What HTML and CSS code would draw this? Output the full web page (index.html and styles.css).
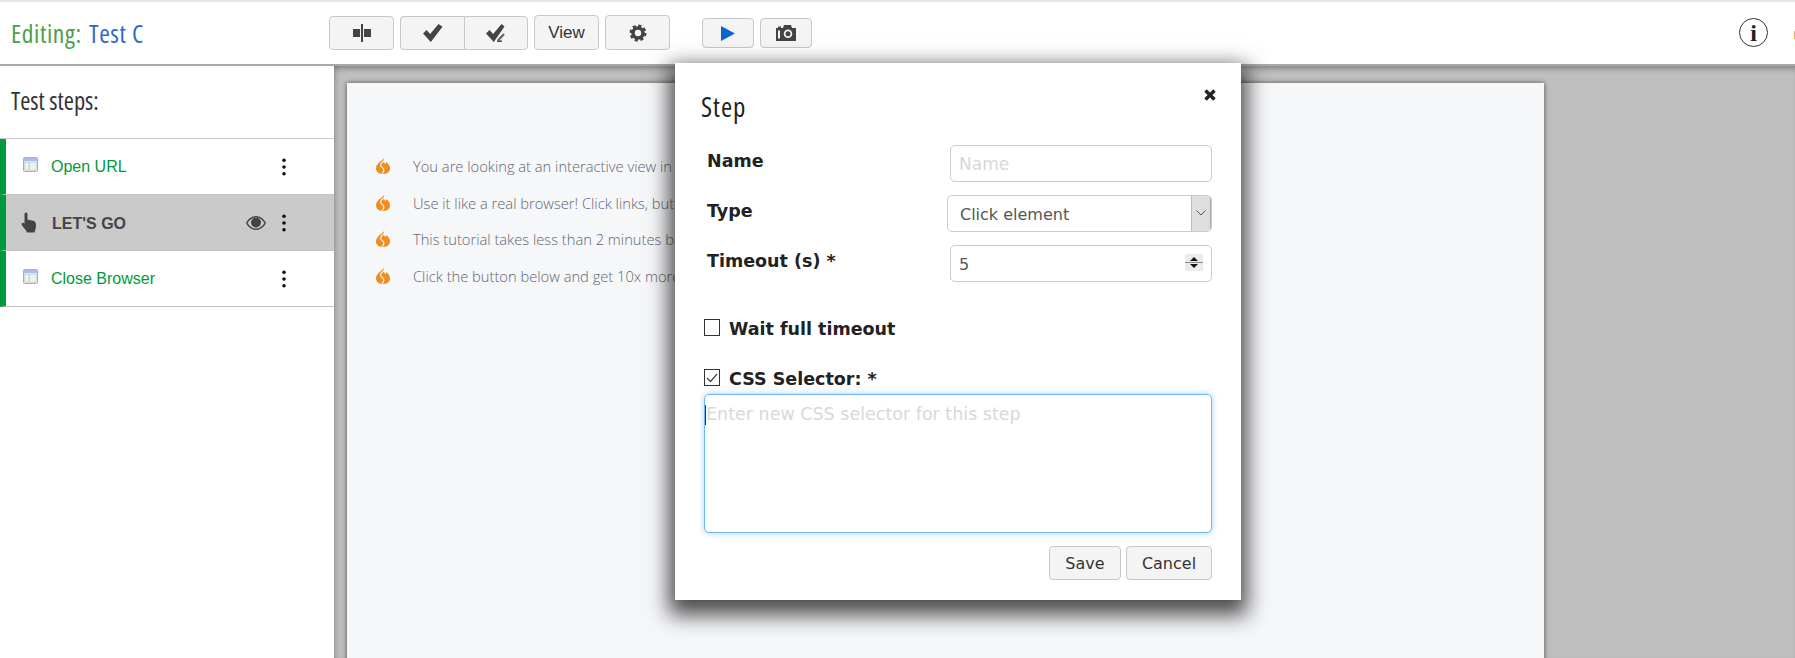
FILE: index.html
```html
<!DOCTYPE html>
<html lang="en">
<head>
<meta charset="utf-8">
<title>Editing: Test C</title>
<link rel="stylesheet" href="styles.css">
</head>
<body>
<svg class="defs" width="0" height="0" aria-hidden="true">
  <defs>
    <symbol id="i-window" viewBox="0 0 15 15">
      <rect x="0.5" y="0.5" width="14" height="14" rx="1" fill="#dfe6e4" stroke="#a3aebb"/>
      <rect x="1" y="1" width="13" height="3" fill="#a9bfe4"/>
      <rect x="2" y="5.500" width="3.500" height="7.500" fill="#f4f6f4" stroke="#c3cbc9" stroke-width=".6"/>
      <rect x="6.500" y="5.500" width="6.500" height="7.500" fill="#eef1ee" stroke="#cfd5d3" stroke-width=".6"/>
    </symbol>
    <symbol id="i-kebab" viewBox="0 0 6 18">
      <circle cx="3" cy="2.300" r="1.800" fill="#111"/>
      <circle cx="3" cy="9" r="1.800" fill="#111"/>
      <circle cx="3" cy="15.700" r="1.800" fill="#111"/>
    </symbol>
    <symbol id="i-fire" viewBox="0 0 15 16">
      <path fill="#ee8d22" d="M8.500 0c.6 1.700 0 2.700-.8 3.700 1.800.4 2.400 1.400 2.700 2.500.6-.5.8-1.200.7-2.200 2.300 1.600 3.900 3.900 3.900 6.500 0 3.400-3 5.500-7 5.500s-7-2.100-7-5.500c0-2.800 1.700-4.500 3-6C5.700 3.200 7.800 2.200 8.500 0z"/>
      <path fill="none" stroke="#f6f7f9" stroke-width="1.200" d="M8 3.500C4.800 6 5 8.200 7.500 9.700 9.600 11 9.200 13.500 7 15.500"/>
    </symbol>
  </defs>
</svg>
<div class="app">
  <header class="topbar">
    <h1 class="page-title"><span class="title-label">Editing:</span> <span class="title-name">Test C</span></h1>
    <div class="toolbar">
      <button class="btn btn-wide" type="button" aria-label="Split">
        <svg width="18" height="18" viewBox="0 0 18 18"><path fill="#444" d="M0 5h7v8H0zM11 5h7v8h-7zM8 0h2v18H8z"/></svg>
      </button>
      <div class="btn-group">
        <button class="btn btn-seg" type="button" aria-label="Check">
          <svg width="20" height="18" viewBox="0 0 20 18"><path fill="#444" d="M0 9.500 3.500 6l3.700 4L15.500 0 19.500 2.800 7.800 18z"/></svg>
        </button>
        <button class="btn btn-seg" type="button" aria-label="Check all">
          <svg width="20" height="18" viewBox="0 0 20 18"><path fill="#444" d="M0 9.500 3.500 6l3.700 4L15.500 0 18.500 2.500 7.800 18z"/><path fill="none" stroke="#666" stroke-width="2.200" d="M12 16.500l6-6.500"/><path fill="none" stroke="#444" stroke-width="1.500" d="M11 17.200h5"/></svg>
        </button>
      </div>
      <button class="btn btn-wide btn-tall btn-text" type="button">View</button>
      <button class="btn btn-wide btn-tall" type="button" aria-label="Settings">
        <svg width="18" height="18" viewBox="0 0 18 18"><circle cx="9" cy="9" r="5" fill="none" stroke="#444" stroke-width="3.600"/><circle cx="9" cy="9" r="7.300" fill="none" stroke="#444" stroke-width="2.400" stroke-dasharray="3.200 2.534"/></svg>
      </button>
      <div class="run-group">
        <button class="btn btn-small" type="button" aria-label="Run">
          <svg width="14" height="15" viewBox="0 0 14 15"><path fill="#0b64d0" d="M0 0l14 7.500L0 15z"/></svg>
        </button>
        <button class="btn btn-small" type="button" aria-label="Screenshot">
          <svg width="20" height="16" viewBox="0 0 20 16"><path fill="#444" fill-rule="evenodd" d="M0 3h2V1.500h3V3h2l1-3h7l1 3h4v13H0zM12 4.500a4.300 4.300 0 1 0 0 8.600 4.300 4.300 0 0 0 0-8.600zM12 6.300a2.500 2.500 0 1 1 0 5 2.500 2.500 0 0 1 0-5zM2 5.500v8h2v-8z"/></svg>
        </button>
      </div>
    </div>
    <div class="info-icon"><span>i</span></div>
    <span class="edge-mark"></span>
  </header>

  <div class="workspace">
    <aside class="sidebar">
      <h2 class="side-title">Test steps:</h2>
      <ul class="steps">
        <li class="step">
          <svg class="step-icon" width="15" height="15"><use href="#i-window"/></svg>
          <span class="step-name">Open URL</span>
          <svg class="kebab" width="6" height="18"><use href="#i-kebab"/></svg>
        </li>
        <li class="step step-active">
          <svg class="step-icon step-hand" width="17" height="21" viewBox="0 0 17 21"><path fill="#444" d="M5 .5c1 0 1.500.8 1.500 1.800V8l1.300-.3c.8-.1 1.300.2 1.600.7.800-.4 1.500-.2 2 .4.800-.3 1.500-.1 2 .5 1 .8 1.600 2 1.600 4 0 3-.8 5-1.500 7.200H6c-.8-2-2.500-4-4-5.800C1 13.500.2 12.300.7 11.300c.5-.8 1.700-.7 2.600.2l.2.300V2.300C3.500 1.300 4 .5 5 .5z"/></svg>
          <span class="step-name">LET'S GO</span>
          <svg class="eye" width="20" height="14" viewBox="0 0 20 14"><path fill="#444" fill-rule="evenodd" d="M10 0c4.500 0 8 3 10 7-2 4-5.500 7-10 7S2 11 0 7c2-4 5.500-7 10-7zM10 1.500C6.500 1.500 3.500 3.500 1.500 7c2 3.500 5 5.500 8.500 5.500S16.500 10.500 18.500 7C16.500 3.500 13.500 1.500 10 1.500z"/><circle cx="10" cy="6.500" r="5" fill="#444"/></svg>
          <svg class="kebab" width="6" height="18"><use href="#i-kebab"/></svg>
        </li>
        <li class="step">
          <svg class="step-icon" width="15" height="15"><use href="#i-window"/></svg>
          <span class="step-name">Close Browser</span>
          <svg class="kebab" width="6" height="18"><use href="#i-kebab"/></svg>
        </li>
      </ul>
    </aside>
    <main class="stage">
      <section class="sheet">
        <ul class="tips">
          <li class="tip"><svg width="15" height="16"><use href="#i-fire"/></svg><span>You are looking at an interactive view in</span></li>
          <li class="tip"><svg width="15" height="16"><use href="#i-fire"/></svg><span>Use it like a real browser! Click links, but</span></li>
          <li class="tip"><svg width="15" height="16"><use href="#i-fire"/></svg><span>This tutorial takes less than 2 minutes bu</span></li>
          <li class="tip"><svg width="15" height="16"><use href="#i-fire"/></svg><span>Click the button below and get 10x more</span></li>
        </ul>
      </section>
    </main>
  </div>

  <div class="modal" role="dialog">
    <div class="modal-head">
      <h3 class="modal-title">Step</h3>
      <svg class="close" width="12" height="12" viewBox="0 0 12 12"><path stroke="#222" stroke-width="3.400" d="M1.500 1.500l9 9M10.500 1.500l-9 9"/></svg>
    </div>
    <form class="form">
      <div class="form-grid">
        <label class="field-label">Name</label>
        <input class="control control-inset" type="text" placeholder="Name">
        <label class="field-label">Type</label>
        <div class="select-wrap">
          <span class="select-value">Click element</span>
          <span class="select-arrow"><svg width="10" height="6" viewBox="0 0 10 6"><path fill="none" stroke="#555" d="M.5.500 5 5 9.500.500"/></svg></span>
        </div>
        <label class="field-label">Timeout (s) *</label>
        <div class="number-wrap control-inset">
          <input class="control control-full" type="text" value="5">
          <span class="spinner"><svg width="18" height="17" viewBox="0 0 18 17"><rect width="18" height="17" fill="#ececec"/><path fill="#111" d="M5 7l4-4 4 4zM5 10l4 4 4-4z"/><path stroke="#888" d="M0 8.500h18"/></svg></span>
        </div>
      </div>
      <div class="check-row check-wait">
        <span class="checkbox"></span>
        <span class="check-label">Wait full timeout</span>
      </div>
      <div class="check-row check-css">
        <span class="checkbox"><svg width="12" height="10" viewBox="0 0 12 10"><path fill="none" stroke="#444" stroke-width="1.200" d="M1 5l3.500 3.500L11 1"/></svg></span>
        <span class="check-label">CSS Selector: *</span>
      </div>
      <div class="area-wrap">
        <textarea class="area" placeholder="Enter new CSS selector for this step"></textarea>
        <span class="caret"></span>
      </div>
      <div class="actions">
        <button class="btn btn-action btn-save" type="button">Save</button>
        <button class="btn btn-action btn-cancel" type="button">Cancel</button>
      </div>
    </form>
  </div>
</div>
</body>
</html>
```
FILE: styles.css
```css
* { box-sizing: border-box; }
html, body { margin: 0; padding: 0; height: 100%; overflow: hidden; background: #fff; }
body { font-family: "Liberation Sans", Arial, sans-serif; color: #333; }
.defs { position: absolute; }
ul { list-style: none; margin: 0; padding: 0; }
h1, h2, h3 { margin: 0; font-weight: 300; }

.app { position: relative; display: flex; flex-direction: column; height: 658px; width: 1795px; overflow: hidden; }

.topbar { display: flex; align-items: flex-start; height: 66px; flex: none; border-top: 2px solid #e6e6e6; border-bottom: 2px solid #a9a9a9; background: #fff; position: relative; z-index: 2; }
.page-title, .side-title, .modal-title { font-family: "Open Sans", sans-serif; font-stretch: 75%; font-weight: 400; line-height: 32px; }
.page-title { width: 329px; padding: 15px 0 0 11px; flex: none; white-space: nowrap; font-size: 25.500px; letter-spacing: .6px; }
.title-label { color: #4a9e4a; }
.title-name { color: #2f69c6; margin-left: 2px; }

.toolbar { display: flex; align-items: flex-start; gap: 6px; padding-top: 13px; }
.btn { display: flex; align-items: center; justify-content: center; background: #f4f4f4; border: 1px solid #c8c8c8; border-radius: 4px; padding: 0; font-family: "Liberation Sans", sans-serif; color: #333; }
.btn-wide { width: 65px; height: 34px; margin-top: 1px; }
.btn-tall { height: 35px; margin-top: 0; }
.btn-text { font-size: 17px; }
.btn-group { display: flex; margin-top: 1px; }
.btn-seg { width: 64px; height: 34px; border-radius: 0; }
.btn-seg:first-child { border-radius: 4px 0 0 4px; border-right: 0; }
.btn-seg:last-child { border-radius: 0 4px 4px 0; }
.run-group { display: flex; gap: 6px; margin-left: 26px; margin-top: 3px; }
.btn-small { width: 52px; height: 30px; }

.info-icon { position: absolute; left: 1739px; top: 16px; width: 29px; height: 29px; border: 1.500px solid #333; border-radius: 50%; display: flex; align-items: center; justify-content: center; font-family: "Liberation Serif", serif; font-weight: 700; font-size: 24px; line-height: 1; color: #222; }
.edge-mark { position: absolute; left: 1794px; top: 29px; width: 1px; height: 8px; background: #f1b24a; }

.workspace { flex: 1; display: flex; min-height: 0; }
.sidebar { width: 334px; flex: none; background: #fff; }
.side-title { color: #333; padding: 19px 0 0 11px; height: 72px; font-size: 24.500px; }
.steps { border-top: 1px solid #ccc; }
.step { display: flex; align-items: center; height: 56px; border-left: 6px solid #009a3c; border-bottom: 1px solid #c4c4c4; padding-left: 17px; position: relative; }
.step-icon { flex: none; margin-right: 13px; margin-top: -5px; }
.step-hand { margin-left: -2px; margin-right: 14px; margin-top: 0; }
.step-name { font-size: 16px; color: #009a3c; flex: 1; }
.step-active { background: #cacaca; }
.step-active .step-name { font-weight: 700; color: #444; padding-top: 2px; }
.eye { flex: none; margin-right: 15px; }
.kebab { flex: none; margin-right: 47px; }

.stage { flex: 1; background: #bfbfbf; padding: 17px 251px 0 13px; overflow: hidden; box-shadow: inset 0 6px 6px -4px rgba(0,0,0,.35), inset 6px 0 6px -5px rgba(0,0,0,.25); }
.sheet { height: 700px; background: #f6f7f9; box-shadow: 0 0 5px rgba(0,0,0,.6); padding-top: 72px; }
.tips { display: flex; flex-direction: column; gap: 14.500px; padding-left: 28px; }
.tip { display: flex; align-items: center; gap: 23px; height: 22px; white-space: nowrap; font-family: "Open Sans", sans-serif; font-weight: 300; font-size: 14.700px; color: #5f6673; }
.tip svg { flex: none; }

.modal { position: absolute; left: 675px; top: 63px; width: 566px; height: 537px; background: #fff; z-index: 5; box-shadow: 0 9px 20px 6px rgba(0,0,0,.7); padding: 0 29px 0 26px; font-family: "DejaVu Sans", sans-serif; }
.modal-head { display: flex; justify-content: space-between; align-items: flex-start; height: 82px; }
.modal-title { color: #222; padding-top: 28px; font-size: 27px; letter-spacing: 1px; }
.close { margin-top: 26px; margin-right: -4px; }
.form-grid { display: grid; grid-template-columns: 246px 265px; grid-auto-rows: 36.500px; row-gap: 13.500px; }
.field-label { font-weight: 700; font-size: 17.500px; color: #222; padding: 6px 0 0 6px; line-height: 20px; white-space: nowrap; }
.control { height: 36.500px; border: 1px solid #ccc; border-radius: 5px; background: #fff; font: 16px "DejaVu Sans", sans-serif; color: #555; padding: 2px 8px 0; outline: none; min-width: 0; }
.control::placeholder { color: #d8d8d8; font-size: 17px; }
.control-inset { margin-left: 3px; }
.control-full { width: 100%; }
.select-wrap { display: flex; align-items: center; height: 36.500px; border: 1px solid #ccc; border-radius: 5px; overflow: hidden; }
.select-value { flex: 1; font-size: 16px; color: #555; padding: 2px 0 0 12px; }
.select-arrow { width: 20px; height: 100%; background: #dedede; border-left: 1px solid #bbb; border-right: 1px solid #aaa; display: flex; align-items: center; justify-content: center; }
.number-wrap { position: relative; height: 36.500px; }
.spinner { position: absolute; right: 9px; top: 9px; width: 18px; height: 17px; display: flex; }
.check-row { display: flex; align-items: center; gap: 9px; margin-left: 3px; height: 20px; }
.check-wait { margin-top: 36px; }
.check-css { margin-top: 30px; }
.checkbox { width: 16px; height: 17px; border: 1px solid #333; background: #fff; display: flex; align-items: center; justify-content: center; flex: none; }
.check-label { font-weight: 700; font-size: 17.500px; color: #222; white-space: nowrap; padding-top: 2px; }
.area-wrap { position: relative; margin: 6px 0 0 3px; height: 139px; }
.area { display: block; width: 100%; height: 100%; resize: none; border: 1px solid #6fb6f5; border-radius: 5px; outline: none; box-shadow: 0 0 6px rgba(90,170,245,.55); padding: 9px 1px; font: 17.500px/20px "DejaVu Sans", sans-serif; background: #fff; }
.area::placeholder { color: #d8d8d8; }
.caret { position: absolute; left: 1px; top: 11px; width: 1px; height: 20px; background: #333; }
.actions { display: flex; justify-content: flex-end; gap: 5px; margin-top: 13px; }
.btn-action { height: 34px; font-family: "DejaVu Sans", sans-serif; font-size: 16px; color: #333; padding-top: 1px; }
.btn-save { width: 72px; }
.btn-cancel { width: 86px; }
```
